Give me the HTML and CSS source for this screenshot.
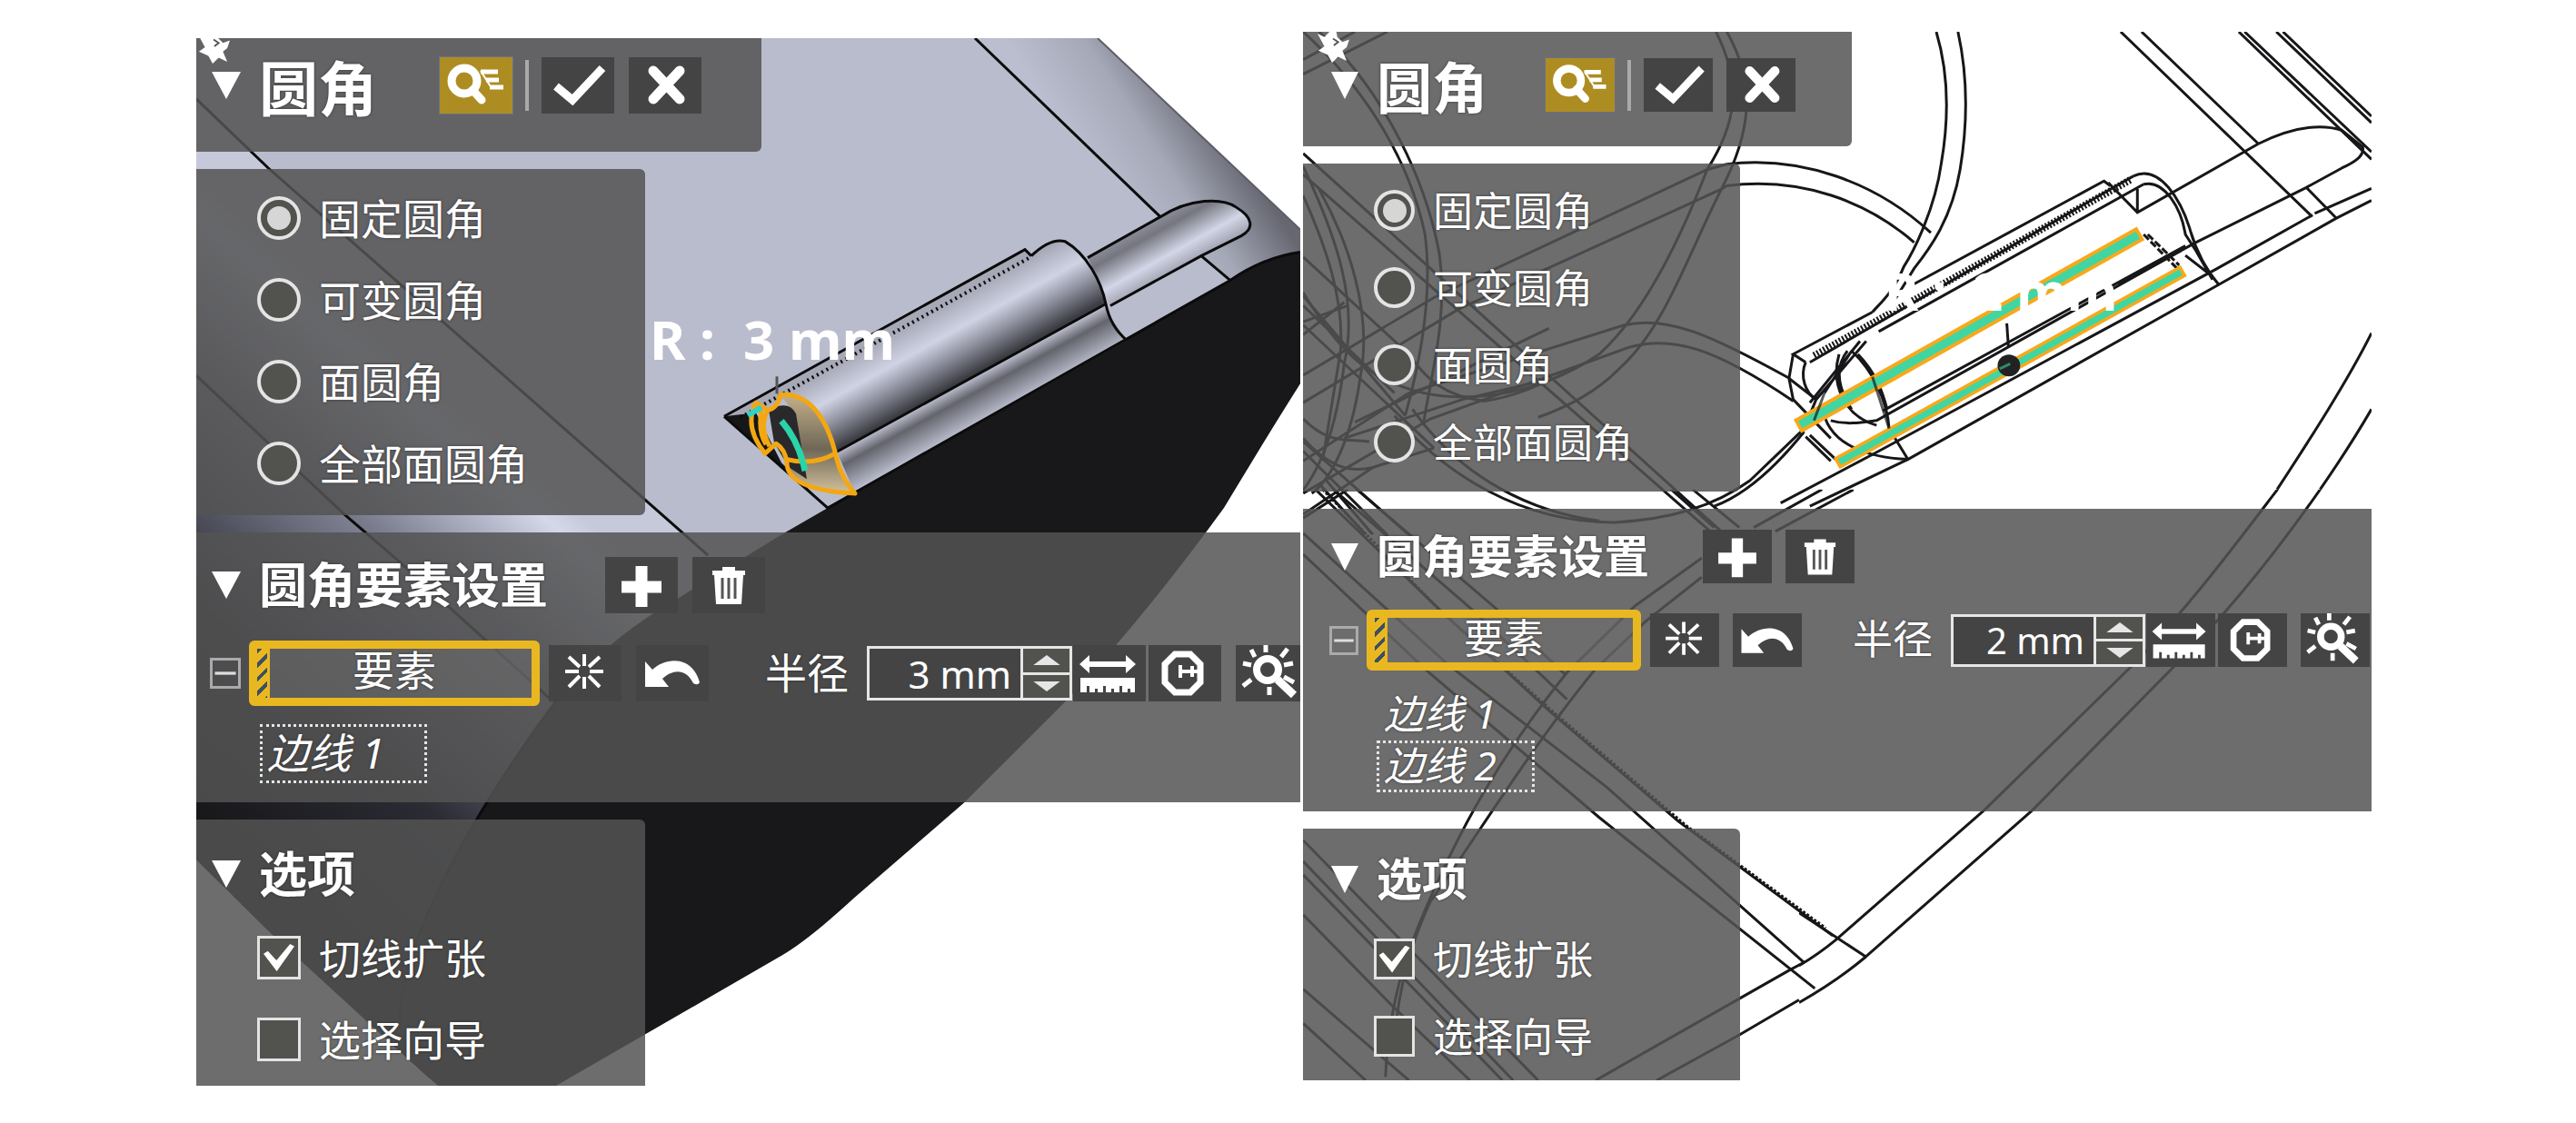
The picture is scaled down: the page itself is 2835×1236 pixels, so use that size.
FILE: index.html
```html
<!DOCTYPE html>
<html lang="zh-CN">
<head>
    <meta charset="UTF-8">
    <meta name="viewport" content="width=device-width, initial-scale=1.0">
    <title>圆角</title>
    <link rel="stylesheet" href="styles.css">
</head>
<body>

    <!-- Shared icons -->
    <svg class="icon-defs" aria-hidden="true">
        <symbol id="i-down" viewBox="0 0 32 30" preserveAspectRatio="none">
            <path d="M0 0H32L16 30Z" fill="#fff"/>
        </symbol>
        <symbol id="i-pin" viewBox="0 0 40 36">
            <path d="M2 2L10 6L16 0L24 0L25 6L31 12L39 9L36 18L31 22L36 34L26 29L19 36L14 27L3 22L10 17Z" fill="#fff"/>
            <path d="M20 8L26 12L21 16" stroke="#555" stroke-width="2" fill="none"/>
        </symbol>
        <symbol id="i-search" viewBox="0 0 80 62">
            <g fill="none" stroke="#fff">
                <circle cx="27" cy="26" r="14" stroke-width="9"/>
                <path d="M36 36L46 47" stroke-width="9" stroke-linecap="round"/>
                <path d="M45 16H64M51 25H65M55 33H70" stroke-width="5"/>
                <path d="M45 15L57 34" stroke-width="2"/>
            </g>
        </symbol>
        <symbol id="i-check" viewBox="0 0 80 62">
            <path d="M16 32L34 47L67 12" fill="none" stroke="#fff" stroke-width="9"/>
        </symbol>
        <symbol id="i-close" viewBox="0 0 80 62">
            <path d="M27 15L56 46M56 15L27 46" fill="none" stroke="#fff" stroke-width="11" stroke-linecap="round"/>
        </symbol>
        <symbol id="i-plus" viewBox="0 0 80 62">
            <path d="M40 10V55M18 33H62" fill="none" stroke="#fff" stroke-width="13"/>
        </symbol>
        <symbol id="i-trash" viewBox="0 0 80 62">
            <path d="M22 15H33V11H47V15H58V20H56L54 52H26L24 20H22Z" fill="#fff"/>
            <path d="M33 23V46M40 23V46M47 23V46" stroke="#555" stroke-width="3"/>
        </symbol>
        <symbol id="i-burst" viewBox="0 0 80 62">
            <path d="M39 10V23M39 35V48M18 29H33M45 29H60M22 13L34 24M56 13L44 24M22 46L34 34M56 46L44 34" stroke="#fff" stroke-width="4"/>
        </symbol>
        <symbol id="i-undo" viewBox="0 0 80 62">
            <path d="M10 18L18 27C32 14 61 10 70 41Q68 45 63 42C55 26 41 26 29 37L36 46H10Z" fill="#fff"/>
        </symbol>
        <symbol id="i-ruler" viewBox="0 0 80 62">
            <path d="M14 21H62" stroke="#fff" stroke-width="6"/>
            <path d="M7 21L18 11V31ZM69 21L58 11V31Z" fill="#fff"/>
            <path d="M8 36H68V52H63V48H60V52H54V45H51V52H45V48H42V52H36V45H33V52H27V48H24V52H18V45H15V52H8Z" fill="#fff"/>
        </symbol>
        <symbol id="i-radius" viewBox="0 0 80 62">
            <path d="M29 10H46L57 21V41L46 52H29L18 41V21Z" fill="none" stroke="#fff" stroke-width="7"/>
            <path d="M33 29H58M35 22V36M48 23V35" stroke="#fff" stroke-width="4"/>
        </symbol>
        <symbol id="i-probe" viewBox="0 0 80 62">
            <circle cx="35" cy="27" r="12" fill="none" stroke="#fff" stroke-width="8"/>
            <path d="M46 38L64 55" stroke="#fff" stroke-width="9"/>
            <path d="M33 0V8M17 5L21 13M57 4L50 13M8 20L17 22M53 22L63 20M8 45L17 38M53 35L64 41M37 46V55" stroke="#fff" stroke-width="5"/>
        </symbol>
        <symbol id="i-minus" viewBox="0 0 34 34">
            <path d="M3 17H31" stroke="#ddd" stroke-width="4"/>
        </symbol>
        <symbol id="i-up" viewBox="0 0 32 12">
            <path d="M0 12L16 0L32 12Z" fill="#e6e6e6"/>
        </symbol>
    </svg>

    <main class="compare">

        <!-- Shaded model -->
        <section class="view view-shaded">
            <svg class="scene" viewBox="216 42 1215 1155" preserveAspectRatio="none" aria-hidden="true">
                <defs>
                    <linearGradient id="side" gradientUnits="userSpaceOnUse" x1="216" y1="577" x2="405" y2="362">
                        <stop offset="0" stop-color="#303036"/>
                        <stop offset=".5" stop-color="#85879a"/>
                        <stop offset=".9" stop-color="#d4d8ea"/>
                        <stop offset="1" stop-color="#c6c9da"/>
                    </linearGradient>
                    <linearGradient id="low" gradientUnits="userSpaceOnUse" x1="300" y1="1000" x2="560" y2="705">
                        <stop offset="0" stop-color="#151517"/>
                        <stop offset=".5" stop-color="#2b2c34"/>
                        <stop offset="1" stop-color="#85879a"/>
                    </linearGradient>
                    <linearGradient id="edge" gradientUnits="userSpaceOnUse" x1="1175" y1="150" x2="1298" y2="70">
                        <stop offset="0" stop-color="#bbbece"/>
                        <stop offset=".5" stop-color="#a5a8b7"/>
                        <stop offset="1" stop-color="#666771"/>
                    </linearGradient>
                    <linearGradient id="barrel" gradientUnits="userSpaceOnUse" x1="1135" y1="282" x2="1175" y2="354">
                        <stop offset="0" stop-color="#a6a8b6"/>
                        <stop offset=".38" stop-color="#d0d3e4"/>
                        <stop offset=".65" stop-color="#9294a2"/>
                        <stop offset="1" stop-color="#3c3d43"/>
                    </linearGradient>
                    <linearGradient id="barrel2" gradientUnits="userSpaceOnUse" x1="1070" y1="418" x2="1093" y2="460">
                        <stop offset="0" stop-color="#b4b6c5"/>
                        <stop offset=".3" stop-color="#63646c"/>
                        <stop offset="1" stop-color="#c0c3d4"/>
                    </linearGradient>
                    <linearGradient id="rod" gradientUnits="userSpaceOnUse" x1="1238" y1="258" x2="1268" y2="312">
                        <stop offset="0" stop-color="#8e909d"/>
                        <stop offset=".25" stop-color="#75767f"/>
                        <stop offset=".7" stop-color="#d3d6e7"/>
                        <stop offset="1" stop-color="#a4a6b4"/>
                    </linearGradient>
                    <linearGradient id="fillet" x1="0" y1="0" x2="0" y2="1">
                        <stop offset="0" stop-color="#c3b08a"/>
                        <stop offset=".55" stop-color="#6f6757"/>
                        <stop offset="1" stop-color="#d3c19b"/>
                    </linearGradient>
                </defs>
                <rect x="216" y="42" width="1215" height="1155" fill="#fff"/>
                <path d="M216 42H1208L1431 253V278L859 590L673 709L216 948Z" fill="#b9bccc"/>
                <path d="M216 109L295 185L710 551L779 612L819 612L673 709L612 773C500 925 445 1050 440 1170L216 948Z" fill="url(#side)"/>
                <path d="M216 414L379 567L608 773C500 925 445 1050 440 1170L216 948Z" fill="url(#low)"/>
                <path d="M1073 42H1208L1431 253V278L1354 309L1277 239Z" fill="url(#edge)"/>
                <path d="M1431 278Q1390 284 1354 309L911 560L859 590L716 678Q640 730 612 773C500 925 440 1050 440 1160L469 1186L482 1197H612L861 1053Q890 1036 940 990L1061 885L1173 773Q1260 680 1347 560Q1395 480 1431 423Z" fill="#18181a"/>
                <path d="M216 948L297 1028L469 1186L482 1197H216Z" fill="#fff"/>
                <g fill="none" stroke="#0b0b0c" stroke-width="3">
                    <path d="M216 109L295 185L710 551L779 612"/>
                    <path d="M216 414L379 567L436 616L608 773"/>
                    <path d="M612 773C500 925 440 1050 440 1130"/>
                    <path d="M1073 42L1277 239"/>
                    <path d="M1208 42L1431 253" stroke="#5c5d66" stroke-width="2"/>
                </g>

                <path d="M1197 284L1277 239Q1332 208 1366 230Q1384 248 1366 260L1222 337Z" fill="url(#rod)"/>
                <path d="M797 459L1128 275L1135 282Q1158 262 1172 266C1196 280 1212 310 1217 335L921 498L862 440L820 462Z" fill="url(#barrel)"/>
                <path d="M1217 335L1222 350L1240 375L941 544L921 498Z" fill="url(#barrel2)"/>
                <path d="M797 459L832 455L860 510L911 560Z" fill="#161617"/>
                <g fill="none" stroke="#0b0b0c" stroke-width="3">
                    <path d="M1197 284L1277 239C1310 218 1345 218 1360 228C1380 240 1380 252 1366 260L1322 282L1222 337"/>
                    <path d="M1322 282L1354 309"/>
                    <path d="M797 459L1128 275L1135 282"/>
                    <path d="M815 460L1135 283" stroke-width="4" stroke-dasharray="2 4"/>
                    <path d="M1135 282Q1156 262 1172 266C1196 280 1212 310 1217 335Q1222 360 1240 375"/>
                    <path d="M1217 335L921 498"/>
                    <path d="M1431 278Q1390 284 1354 309L911 560L797 459"/>
                </g>
                <path d="M859 435C895 432 912 470 919 498Q924 525 941 544Q892 540 874 526L864 509L870 450Z" fill="url(#fillet)"/>
                <path d="M846 452Q868 440 876 456L880 480L884 505L888 528L868 515L852 488Z" fill="#29292b"/>
                <g fill="none" stroke="#f3a712" stroke-width="5" stroke-linejoin="round">
                    <path d="M832 444Q818 470 842 500L854 489Q864 495 866 510Q866 540 941 544Q924 525 919 498C912 470 895 432 859 435Q856 450 845 452Z"/>
                    <path d="M845 452Q835 470 847 492M838 452Q834 476 843 490M864 506Q895 514 919 500"/>
                </g>
                <path d="M860 464Q879 486 886 519" fill="none" stroke="#2bd3a8" stroke-width="7"/>
                <path d="M823 458L838 449" stroke="#2bd3c8" stroke-width="6"/>
                <path d="M855 415V434" stroke="#555" stroke-width="3"/>
            </svg>
            <span class="callout callout-shaded">R :  3 mm</span>
            <svg class="pin"><use href="#i-pin"/></svg>

            <header class="panel title-panel">
                <svg class="arrow"><use href="#i-down"/></svg>
                <h1>圆角</h1>
                <button class="tool tool-active" aria-label="预览"><svg><use href="#i-search"/></svg></button>
                <span class="divider"></span>
                <button class="tool" aria-label="确定"><svg><use href="#i-check"/></svg></button>
                <button class="tool tool-next" aria-label="取消"><svg><use href="#i-close"/></svg></button>
            </header>

            <div class="panel mode-panel">
                <label class="choice"><input type="radio" name="mode-a" checked>固定圆角</label>
                <label class="choice"><input type="radio" name="mode-a">可变圆角</label>
                <label class="choice"><input type="radio" name="mode-a">面圆角</label>
                <label class="choice"><input type="radio" name="mode-a">全部面圆角</label>
            </div>

            <div class="panel element-panel">
                <div class="panel-head">
                    <svg class="arrow"><use href="#i-down"/></svg>
                    <h2>圆角要素设置</h2>
                    <button class="tool" aria-label="添加"><svg><use href="#i-plus"/></svg></button>
                    <button class="tool tool-next" aria-label="删除"><svg><use href="#i-trash"/></svg></button>
                </div>
                <div class="element-row">
                    <button class="fold" aria-label="折叠"><svg><use href="#i-minus"/></svg></button>
                    <button class="picker">要素</button>
                    <button class="tool" aria-label="清除"><svg><use href="#i-burst"/></svg></button>
                    <button class="tool tool-next" aria-label="撤销"><svg><use href="#i-undo"/></svg></button>
                    <label class="radius-label" for="radius-a">半径</label>
                    <div class="spin">
                        <input id="radius-a" type="text" value="3 mm">
                        <div class="spin-buttons">
                            <button aria-label="增加"><svg><use href="#i-up"/></svg></button>
                            <button aria-label="减少"><svg class="flip"><use href="#i-up"/></svg></button>
                        </div>
                    </div>
                    <button class="tool tool-measure" aria-label="测量距离"><svg><use href="#i-ruler"/></svg></button>
                    <button class="tool tool-radius" aria-label="测量半径"><svg><use href="#i-radius"/></svg></button>
                    <button class="tool tool-next" aria-label="估算"><svg><use href="#i-probe"/></svg></button>
                </div>
                <ul class="edges">
                    <li class="selected">边线 1</li>
                </ul>
            </div>

            <div class="panel option-panel">
                <div class="panel-head">
                    <svg class="arrow"><use href="#i-down"/></svg>
                    <h2>选项</h2>
                </div>
                <label class="choice"><input type="checkbox" checked>切线扩张</label>
                <label class="choice"><input type="checkbox">选择向导</label>
            </div>
        </section>

        <!-- Wireframe model -->
        <section class="view view-wire">
            <svg class="scene wire" viewBox="1434 35 1176 1157" preserveAspectRatio="none" aria-hidden="true">
                <!-- upper left curves -->
                <svg x="1420" y="30" width="620" height="560" viewBox="0 0 1568 1568" preserveAspectRatio="none">
                    <path d="M36 14C200 180 330 400 375 640C400 850 350 1080 320 1200"/>
                    <path d="M80 14C230 160 370 430 415 700C440 900 390 1080 370 1230"/>
                    <path d="M36 145L270 14M36 100L180 14"/>
                    <path d="M1185 14C1260 180 1240 300 1160 440C1070 700 970 900 860 1010C700 1130 450 1200 250 1080C150 1020 80 900 36 820"/>
                    <path d="M1215 14C1300 180 1280 330 1200 500C1100 720 1040 930 920 1050C860 1120 780 1170 690 1205"/>
                    <path d="M36 390L1210 1568M36 455L1130 1520L1180 1568"/>
                    <path d="M36 1075L400 835L1160 440L1214 423"/>
                    <path d="M36 1160L470 870L1200 500L1214 490"/>
                    <path d="M36 1340L330 1130L930 920C1050 890 1170 950 1390 1085"/>
                    <path d="M36 1440L390 1210L940 990C1060 950 1180 990 1400 1155"/>
                    <path d="M36 430C130 650 190 850 150 1040C130 1230 90 1350 36 1430"/>
                    <path d="M80 500C160 660 230 880 195 1080C170 1280 110 1400 60 1440"/>
                    <path d="M36 520C100 680 150 840 140 1000L90 1340"/>
                    <path d="M36 710L330 1010C380 1090 430 1140 540 1155C640 1140 720 1090 800 1050"/>
                    <path d="M36 830L320 1200M36 860L290 1130M36 920L400 1300"/>
                    <path d="M36 910L160 860M36 950L150 850M36 1505L230 1360L400 1300"/>
                    <path d="M36 1210C110 1290 150 1270 220 1280M36 1270C100 1350 160 1380 230 1360"/>
                    <path d="M180 1220L720 930M150 1270L480 1150L710 1090"/>
                    <path d="M290 1200C430 1380 640 1530 900 1530C1060 1520 1180 1480 1280 1400L1440 1230"/>
                    <path d="M340 1180C480 1400 680 1500 860 1525"/>
                    <path d="M1180 1480Q1300 1430 1430 1250"/>
                    <path d="M36 1280L330 1568M36 1310L270 1568M80 1410L210 1568M100 1400L230 1568"/>
                </svg>
                <!-- lower left curves -->
                <svg x="1420" y="540" width="620" height="660" viewBox="0 0 1568 1568" preserveAspectRatio="none">
                    <path d="M36 75L160 0M70 0L410 310L720 580L1080 870L1510 1170"/>
                    <path d="M90 0L430 330L740 590L1100 880L1490 1150" stroke-dasharray="3 2"/>
                    <path d="M120 0L500 310L770 550M185 0L570 310L765 485"/>
                    <path d="M36 115L440 460L880 780L1430 1240"/>
                    <path d="M36 170L380 475L860 860L1460 1308"/>
                    <path d="M1060 0L1180 100M1120 0L1250 100M1480 0L1290 100M1568 0L1350 110"/>
                    <path d="M1145 180L960 305L770 480C600 680 470 880 350 1160C290 1300 270 1430 265 1540"/>
                    <path d="M1145 230L990 345L850 470C650 700 500 940 390 1080C320 1220 290 1370 290 1480"/>
                    <path d="M36 920L690 1549M36 975L620 1549M36 1010L590 1549M36 1115L280 1350L500 1549"/>
                    <path d="M36 1310L330 1549M36 1400L210 1549"/>
                    <path d="M850 1549L1390 1260L1430 1240M1020 1549L1250 1430L1416 1338"/>
                </svg>
                <!-- lower right curves -->
                <svg x="1980" y="540" width="640" height="660" viewBox="0 0 1568 1568" preserveAspectRatio="none">
                    <path d="M1290 0C1180 140 1050 310 900 460L500 840L100 1180Q50 1220 0 1248"/>
                    <path d="M1405 0C1290 160 1150 330 1010 465L630 840L180 1225Q100 1290 0 1345"/>
                    <path d="M0 1110L180 1225"/>
                </svg>
                <!-- bracket and selected edges -->
                <svg x="1900" y="30" width="720" height="560" viewBox="0 0 1568 1568" preserveAspectRatio="none">
                    <path d="M503 14C530 130 535 270 515 420C500 560 450 690 425 740C400 820 370 850 350 880"/>
                    <path d="M555 14C580 160 578 300 560 440C540 590 490 680 450 745L400 850"/>
                    <path d="M0 423C180 395 360 480 490 635M0 490C180 460 340 540 450 665"/>
                    <path d="M945 14L1400 580M995 14L1275 360"/>
                    <path d="M1228 14L1546 408M1242 14L1546 385M1318 14L1546 295M1334 14L1546 275"/>
                    <path d="M1275 360C1370 300 1430 300 1475 318L1525 370C1530 400 1500 420 1475 435L1390 495L1125 665L940 795"/>
                    <path d="M1275 360L985 572L915 480M985 572V500"/>
                    <path d="M1390 495L1462 590M1405 580L1170 750L350 1320L130 1470"/>
                    <path d="M1462 590L1180 795L435 1335L200 1480M1410 575L1546 498M1462 590L1546 535"/>
                    <path d="M350 880L160 1010L190 1035M440 800L905 475L920 490M365 940L1000 485M200 1035L975 460"/>
                    <path d="M210 1015L970 470" stroke-dasharray="2 2" class="hatch"/>
                    <path d="M975 460C1040 420 1090 540 1110 620C1125 690 1150 750 1180 795"/>
                    <path d="M1000 485C1050 470 1090 560 1100 640L1125 690L1165 780M1100 705L1165 770"/>
                    <path d="M1000 640L1080 745M1010 640L1085 735" stroke-dasharray="8 3"/>
                    <path d="M160 1010L150 1085L160 1150L250 1270M190 1035C175 1080 190 1130 215 1150"/>
                    <path d="M150 1085L215 1150"/>
                    <path d="M300 1000C350 1060 385 1150 390 1240L435 1335M315 1010C360 1070 375 1130 385 1180"/>
                    <path d="M270 1010C250 1100 280 1200 360 1230M290 1000C260 1050 265 1110 300 1180"/>
                    <path d="M335 970L215 1150L180 1260M320 970L200 1160M300 1000L235 1130"/>
                    <path d="M190 1265L250 1340M200 1260L262 1335M250 1215C290 1230 330 1220 360 1215L1090 690M375 1185L1100 675"/>
                    <path d="M230 1170C240 1290 340 1330 435 1335"/>
                    <path d="M1546 945C1490 1090 1400 1270 1320 1428M1546 1180C1510 1260 1470 1340 1423 1428"/>
                    <path class="pick-edge" d="M170 1233L993 637"/>
                    <path class="pick-fill" d="M177 1228L986 642"/>
                    <path class="pick-edge thin" d="M264 1348L1096 752"/>
                    <path class="pick-fill thin" d="M271 1343L1089 757"/>
                    <path d="M350 1080L390 1240M235 1130L210 1215" opacity=".7"/>
                    <path d="M672 915L676 990"/>
                    <ellipse class="handle" cx="677" cy="1045" rx="27" ry="34"/>
                    <path class="handle-mark" d="M655 1055L680 1040"/>
                </svg>
            </svg>
            <span class="callout callout-wire">R :  2 mm</span>
            <svg class="pin"><use href="#i-pin"/></svg>

            <header class="panel title-panel">
                <svg class="arrow"><use href="#i-down"/></svg>
                <h1>圆角</h1>
                <button class="tool tool-active" aria-label="预览"><svg><use href="#i-search"/></svg></button>
                <span class="divider"></span>
                <button class="tool" aria-label="确定"><svg><use href="#i-check"/></svg></button>
                <button class="tool tool-next" aria-label="取消"><svg><use href="#i-close"/></svg></button>
            </header>

            <div class="panel mode-panel">
                <label class="choice"><input type="radio" name="mode-b" checked>固定圆角</label>
                <label class="choice"><input type="radio" name="mode-b">可变圆角</label>
                <label class="choice"><input type="radio" name="mode-b">面圆角</label>
                <label class="choice"><input type="radio" name="mode-b">全部面圆角</label>
            </div>

            <div class="panel element-panel">
                <div class="panel-head">
                    <svg class="arrow"><use href="#i-down"/></svg>
                    <h2>圆角要素设置</h2>
                    <button class="tool" aria-label="添加"><svg><use href="#i-plus"/></svg></button>
                    <button class="tool tool-next" aria-label="删除"><svg><use href="#i-trash"/></svg></button>
                </div>
                <div class="element-row">
                    <button class="fold" aria-label="折叠"><svg><use href="#i-minus"/></svg></button>
                    <button class="picker">要素</button>
                    <button class="tool" aria-label="清除"><svg><use href="#i-burst"/></svg></button>
                    <button class="tool tool-next" aria-label="撤销"><svg><use href="#i-undo"/></svg></button>
                    <label class="radius-label" for="radius-b">半径</label>
                    <div class="spin">
                        <input id="radius-b" type="text" value="2 mm">
                        <div class="spin-buttons">
                            <button aria-label="增加"><svg><use href="#i-up"/></svg></button>
                            <button aria-label="减少"><svg class="flip"><use href="#i-up"/></svg></button>
                        </div>
                    </div>
                    <button class="tool tool-measure" aria-label="测量距离"><svg><use href="#i-ruler"/></svg></button>
                    <button class="tool tool-radius" aria-label="测量半径"><svg><use href="#i-radius"/></svg></button>
                    <button class="tool tool-next" aria-label="估算"><svg><use href="#i-probe"/></svg></button>
                </div>
                <ul class="edges">
                    <li>边线 1</li>
                    <li class="selected">边线 2</li>
                </ul>
            </div>

            <div class="panel option-panel">
                <div class="panel-head">
                    <svg class="arrow"><use href="#i-down"/></svg>
                    <h2>选项</h2>
                </div>
                <label class="choice"><input type="checkbox" checked>切线扩张</label>
                <label class="choice"><input type="checkbox">选择向导</label>
            </div>
        </section>

    </main>

</body>
</html>
```

FILE: styles.css
```css
* {
    box-sizing: border-box;
}

body {
    margin: 0;
    background-color: #fff;
    color: #fff;
    font-family: "Noto Sans", "Noto Sans CJK SC", sans-serif;
}

h1, h2, ul {
    margin: 0;
    padding: 0;
}

button, input {
    margin: 0;
    padding: 0;
    border: 0;
    color: inherit;
    font-family: inherit;
}

.icon-defs {
    display: none;
}

.compare {
    display: grid;
    grid-template-columns: 1215fr 1176fr;
    gap: 3px;
    align-items: start;
    padding: 35px 225px 0 216px;
}

/* sizes of each view */
.view-shaded {
    --title: 65px;
    --heading: 53px;
    --text: 46px;
    --value: 42px;
    --tool-w: 80px;
    --tool-h: 62px;
    --tool-gap: 16px;
    --arrow: 32px;
    --mark: 48px;
    --row: 90px;
    --side: 494px;
    --title-pad: 21px 66px 42px 17px;
    --title-gap: 69px;
    --choice-left: 67px;
    --head-left: 17px;
    --head-top: 27px;
    --head-gap: 63px;
    --fold: 34px;
    --picker-w: 320px;
    --picker-h: 72px;
    --row-top: 30px;
    --label-gap: 62px;
    --spin-w: 226px;
    --spin-h: 60px;
    --edge-w: 184px;
    --edge-h: 65px;
    margin-top: 7px;
}

.view-wire {
    --title: 61px;
    --heading: 50px;
    --text: 44px;
    --value: 40px;
    --tool-w: 76px;
    --tool-h: 59px;
    --tool-gap: 15px;
    --arrow: 30px;
    --mark: 45px;
    --row: 85px;
    --side: 481px;
    --title-pad: 29px 62px 38px 31px;
    --title-gap: 64px;
    --choice-left: 78px;
    --head-left: 31px;
    --head-top: 23px;
    --head-gap: 59px;
    --fold: 32px;
    --picker-w: 302px;
    --picker-h: 67px;
    --row-top: 29px;
    --label-gap: 56px;
    --spin-w: 214px;
    --spin-h: 58px;
    --edge-w: 174px;
    --edge-h: 57px;
}

.view {
    position: relative;
    display: flex;
    flex-direction: column;
    align-items: flex-start;
    gap: 19px;
    overflow: hidden;
}

.scene {
    position: absolute;
    top: 0;
    left: 0;
    width: 100%;
    height: 100%;
}

.wire path {
    fill: none;
    stroke: #17171a;
    stroke-width: 3;
    vector-effect: non-scaling-stroke;
}

.wire .hatch {
    stroke-width: 8;
}

.wire .pick-edge {
    stroke: #f7a81b;
    stroke-width: 17;
}

.wire .pick-fill {
    stroke: #3fd6a4;
    stroke-width: 9;
}

.wire .pick-edge.thin {
    stroke-width: 14;
}

.wire .pick-fill.thin {
    stroke-width: 7;
}

.handle {
    fill: #222;
}

.wire .handle-mark {
    stroke: #2f8a6c;
}

.callout {
    position: absolute;
    z-index: 1;
    font-family: "Noto Sans", sans-serif;
    font-weight: bold;
    line-height: 1;
    white-space: pre;
}

.callout-shaded {
    top: 301px;
    left: 499px;
    font-size: 60px;
}

.callout-wire {
    top: 257px;
    left: 640px;
    font-size: 57px;
}

.pin {
    position: absolute;
    z-index: 2;
    top: 0;
    left: 14px;
    width: 38px;
    height: 34px;
}

.view-shaded .pin {
    top: -6px;
    left: 0;
}

/* panels */
.panel {
    position: relative;
    background-color: rgba(83, 83, 83, 0.85);
    text-shadow: 0 0 3px rgba(30, 30, 30, 0.7);
}

.title-panel {
    display: flex;
    align-items: center;
    padding: var(--title-pad);
    border-radius: 0 0 6px 0;
}

.title-panel h1 {
    height: var(--tool-h);
    margin: 0 var(--title-gap) 0 20px;
    padding-top: 3px;
    font-size: var(--title);
    line-height: var(--tool-h);
}

.arrow {
    flex: none;
    width: var(--arrow);
    height: 30px;
}

.divider {
    width: 4px;
    height: 56px;
    margin: 0 14px;
    background-color: #aaa;
}

.tool {
    flex: none;
    width: var(--tool-w);
    height: var(--tool-h);
    background-color: #444;
}

.tool svg {
    display: block;
    width: 100%;
    height: 100%;
}

.tool-active {
    background-color: #ad8d22;
    outline: 1px solid #68718a;
}

.tool-next {
    margin-left: var(--tool-gap);
}

.mode-panel {
    width: var(--side);
    padding: 9px 0 12px var(--choice-left);
    border-radius: 0 6px 6px 0;
}

.choice {
    display: flex;
    align-items: center;
    gap: 20px;
    height: var(--row);
    font-size: var(--text);
    line-height: 1;
}

.choice input {
    appearance: none;
    display: grid;
    place-items: center;
    flex: none;
    width: var(--mark);
    height: var(--mark);
    border: 4px solid #e4e4e4;
    background-color: #52524f;
}

.choice input[type="radio"] {
    border-radius: 50%;
}

.choice input[type="radio"]:checked::before {
    content: "";
    width: 26px;
    height: 26px;
    border-radius: 50%;
    background-color: #d6d6d6;
}

.choice input[type="checkbox"] {
    border-width: 3px;
}

.choice input[type="checkbox"]:checked::before {
    content: "";
    width: 34px;
    height: 30px;
    background-color: #fff;
    clip-path: polygon(0 36%, 14% 26%, 42% 60%, 86% 0, 100% 8%, 43% 100%);
}

.element-panel {
    width: 100%;
    padding: var(--head-top) 0 21px;
}

.panel-head {
    display: flex;
    align-items: center;
    height: var(--tool-h);
    padding-left: var(--head-left);
}

.panel-head h2 {
    margin: 0 var(--head-gap) 0 20px;
    font-size: var(--heading);
    line-height: var(--tool-h);
    white-space: nowrap;
}

.element-row {
    display: flex;
    align-items: center;
    height: var(--picker-h);
    margin-top: var(--row-top);
    padding-left: calc(var(--head-left) - 2px);
}

.fold {
    flex: none;
    width: var(--fold);
    height: var(--fold);
    border: 3px solid #aaa;
    background: none;
}

.fold svg {
    display: block;
    width: 100%;
    height: 100%;
}

.picker {
    flex: none;
    width: var(--picker-w);
    height: var(--picker-h);
    margin: 0 10px 0 9px;
    padding: 0 0 8px;
    border: 9px solid #e9b820;
    border-radius: 6px;
    background:
        linear-gradient(#e9b820, #e9b820) 11px 0 / 3px 100% no-repeat,
        repeating-linear-gradient(135deg, #3d4f63 0 4px, #e9b820 4px 11px) 0 0 / 11px 100% no-repeat,
        rgba(110, 110, 110, 0.5);
    font-size: var(--text);
    line-height: 1;
    text-shadow: inherit;
}

.radius-label {
    flex: none;
    margin: 0 20px 0 var(--label-gap);
    padding-bottom: 3px;
    font-size: var(--text);
    line-height: 1;
}

.spin {
    display: flex;
    flex: none;
    width: var(--spin-w);
    height: var(--spin-h);
    border: 3px solid #e6e6e6;
    background-color: #444;
}

.spin input {
    flex: 1;
    min-width: 0;
    padding-right: 10px;
    background: none;
    font-size: var(--value);
    text-align: right;
}

.spin-buttons {
    display: flex;
    flex-direction: column;
    width: 54px;
    border-left: 3px solid #e6e6e6;
}

.spin-buttons button {
    flex: 1;
    display: grid;
    place-items: center;
    background-color: #52524f;
}

.spin-buttons button + button {
    border-top: 3px solid #e6e6e6;
}

.spin-buttons svg {
    width: 30px;
    height: 11px;
}

.flip {
    transform: scaleY(-1);
}

.tool-measure {
    margin: 0 3px 0 1px;
}

.edges {
    margin: 20px 0 0 70px;
    list-style: none;
    font-size: var(--text);
    font-style: italic;
}

.view-wire .edges {
    margin-left: 81px;
}

.edges li {
    width: var(--edge-w);
    height: var(--edge-h);
    padding-left: 5px;
    border: 3px dotted transparent;
    line-height: calc(var(--edge-h) - 8px);
    white-space: nowrap;
}

.edges .selected {
    border-color: #e6e6e6;
}

.option-panel {
    width: var(--side);
    padding: 29px 0 6px;
    border-radius: 0 6px 0 0;
}

.option-panel .panel-head {
    margin-bottom: 16px;
}

.view-wire .option-panel {
    padding-top: 26px;
}

.option-panel .choice {
    padding-left: var(--choice-left);
}
```
